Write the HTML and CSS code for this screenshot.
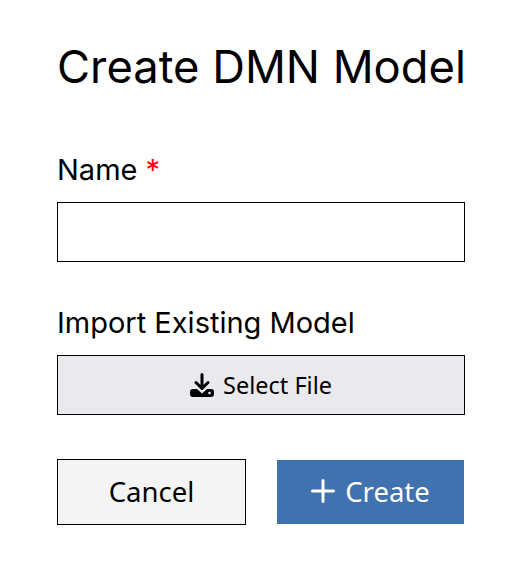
FILE: index.html
```html
<!DOCTYPE html>
<html lang="en">
<head>
  <meta charset="UTF-8">
  <title>Create DMN Model</title>
  <link rel="stylesheet" href="styles.css">
</head>
<body>
  <form class="dialog">
    <h1>Create DMN Model</h1>

    <div class="field">
      <label for="name">Name <span class="required">*</span></label>
      <input type="text" id="name">
    </div>

    <div class="field field-import">
      <label>Import Existing Model</label>
      <button type="button" class="btn-file">
        <svg viewBox="0 0 24 24" width="24" height="24">
          <path d="M12 1.500v13M6 9.500l6 6 6-6" stroke="#000" stroke-width="3" stroke-linecap="round" stroke-linejoin="round" fill="none"/>
          <path d="M3 16h4l5 4.500 5-4.500h4a3 3 0 0 1 3 3v2a3 3 0 0 1-3 3H3a3 3 0 0 1-3-3v-2a3 3 0 0 1 3-3z" fill="#000"/>
          <circle cx="19.500" cy="20" r="1.300" fill="#e9e9ee"/>
        </svg>
        Select File
      </button>
    </div>

    <div class="actions">
      <button type="button" class="btn btn-cancel">Cancel</button>
      <button type="button" class="btn btn-create">
        <svg viewBox="0 0 24 24" width="24" height="24">
          <path d="M12 1.500v21M1.500 12h21" stroke="#fff" stroke-width="3" stroke-linecap="round" fill="none"/>
        </svg>
        Create
      </button>
    </div>
  </form>
</body>
</html>
```

FILE: styles.css
```css
* {
  margin: 0;
  padding: 0;
  box-sizing: border-box;
  font-family: Inter, 'Liberation Sans', sans-serif;
}

body {
  background: #fff;
  color: #000;
}

.dialog {
  width: 522px;
  padding: 41px 57px 0;
}

h1 {
  font-size: 45.300px;
  font-weight: 400;
  line-height: 52px;
  margin-bottom: 60px;
  white-space: nowrap;
}

label {
  display: block;
  font-size: 29px;
  line-height: 34px;
  margin-bottom: 15px;
}

.required {
  color: #f00;
}

.field input {
  display: block;
  width: 100%;
  height: 60px;
  border: 1px solid #000;
  background: #fff;
}

.field-import {
  margin-top: 44px;
}

.btn-file {
  display: flex;
  justify-content: center;
  align-items: center;
  gap: 9px;
  width: 100%;
  height: 60px;
  border: 1px solid #000;
  background: #e9e9ee;
  color: #000;
  font-family: 'Noto Sans', sans-serif;
  font-size: 23.500px;
}

.actions {
  display: flex;
  justify-content: space-between;
  align-items: center;
  margin-top: 44px;
}

.btn {
  display: flex;
  justify-content: center;
  align-items: center;
  gap: 10px;
  padding-bottom: 2px;
  font-family: 'Noto Sans', sans-serif;
  font-size: 27.500px;
}

.btn-cancel {
  width: 189px;
  height: 66px;
  border: 1px solid #000;
  background: #f4f4f4;
  color: #000;
}

.btn-create {
  width: 187px;
  height: 64px;
  margin-right: 1px;
  border: none;
  background: #3f72af;
  color: #fff;
}
```
